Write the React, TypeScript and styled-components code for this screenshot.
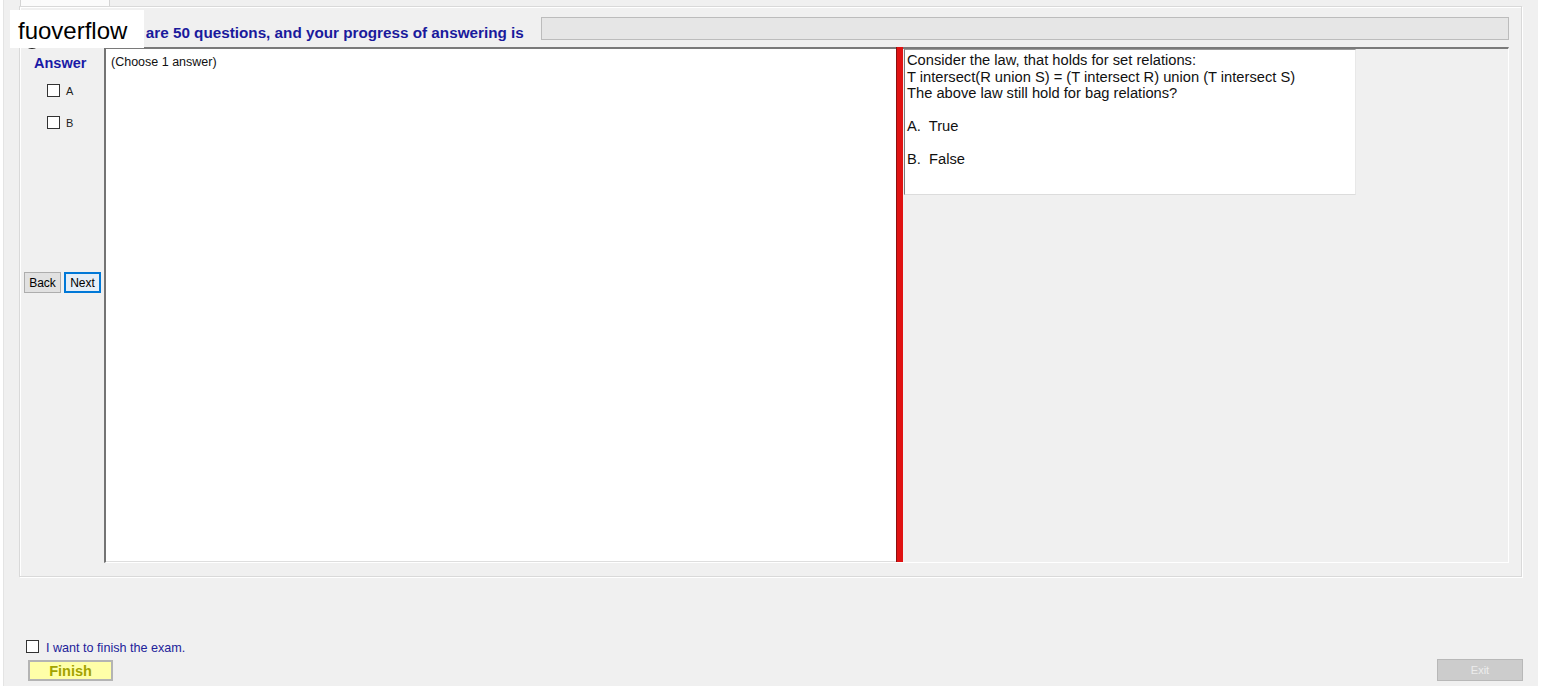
import React from 'react';
import styled, { createGlobalStyle } from 'styled-components';

const GlobalStyle = createGlobalStyle`
  html, body {
    margin: 0;
    padding: 0;
    background: #ffffff;
  }
  body {
    font-family: "Liberation Sans", Arial, sans-serif;
    color: #000;
  }
`;

const Window = styled.div`
  position: relative;
  width: 1535px;
  height: 686px;
  margin-left: 3px;
  background: #f0f0f0;
  border-left: 1px solid #e4e4e4;
  box-sizing: border-box;
  display: flex;
  flex-direction: column;
`;

const TabStrip = styled.div`
  height: 6px;
  padding-left: 16px;
  display: flex;
`;

const Tab = styled.div`
  width: 90px;
  height: 6px;
  background: #fbfbfb;
  border-left: 1px solid #d4d4d4;
  border-right: 1px solid #d4d4d4;
  box-sizing: border-box;
`;

const TabPage = styled.div`
  margin-left: 15px;
  width: 1503px;
  height: 571px;
  box-sizing: border-box;
  border: 1px solid #d9d9d9;
  box-shadow: inset 1px 1px 0 #ffffff, 1px 1px 0 #ffffff;
  padding: 10px 12px 13px 4px;
  display: flex;
  flex-direction: column;
  gap: 7px;
`;

const HeaderRow = styled.div`
  height: 23px;
  display: flex;
  align-items: flex-start;
`;

const HeaderText = styled.div`
  width: 517px;
  flex: none;
  box-sizing: border-box;
  padding: 7px 0 0 76px;
  font-size: 15.25px;
  line-height: 17px;
  font-weight: bold;
  color: #1a1a9c;
  white-space: nowrap;
  overflow: hidden;
`;

const ProgressBar = styled.div`
  flex: 1;
  height: 23px;
  box-sizing: border-box;
  background: #e6e6e6;
  border: 1px solid #bcbcbc;
`;

const ContentRow = styled.div`
  height: 516px;
  display: flex;
`;

const AnswerColumn = styled.div`
  width: 80px;
  flex: none;
  display: flex;
  flex-direction: column;
  padding-top: 8px;
  box-sizing: border-box;
`;

const AnswerTitle = styled.div`
  padding-left: 10px;
  font-size: 14.5px;
  font-weight: bold;
  color: #1a1aa6;
  line-height: 17px;
`;

const OptionRow = styled.label<{ $gap: number }>`
  display: flex;
  align-items: center;
  gap: 6px;
  padding-left: 23px;
  margin-top: ${p => p.$gap}px;
  font-size: 11px;
  color: #222;
  height: 13px;
`;

const Box = styled.span`
  width: 13px;
  height: 13px;
  box-sizing: border-box;
  border: 1px solid #333;
  background: #fff;
  flex: none;
`;

const NavRow = styled.div`
  margin-top: 143px;
  display: flex;
  gap: 3px;
`;

const NavButton = styled.button<{ $focused?: boolean }>`
  width: 37px;
  height: 21px;
  padding: 0;
  box-sizing: border-box;
  font-family: "Liberation Sans", Arial, sans-serif;
  font-size: 12px;
  color: #000;
  background: ${p => (p.$focused ? '#e5eef7' : '#e1e1e1')};
  border: ${p => (p.$focused ? '2px solid #0078d7' : '1px solid #adadad')};
`;

const SplitContainer = styled.div`
  flex: 1;
  display: flex;
  box-sizing: border-box;
  border-top: 2px solid #7a7a7a;
  border-left: 2px solid #747474;
  border-right: 1px solid #ffffff;
  border-bottom: 1px solid #ffffff;
  box-shadow: inset -1px -1px 0 #dedede;
`;

const QuestionPane = styled.div`
  width: 790px;
  flex: none;
  background: #ffffff;
  padding: 6px 5px;
  box-sizing: border-box;
  font-size: 12.5px;
  color: #111;
  margin-bottom: 1px;
`;

const Splitter = styled.div`
  width: 7px;
  flex: none;
  margin-top: -2px;
  background: #e01212;
  border-left: 1px solid #8a1010;
  box-sizing: border-box;
`;

const DetailPane = styled.div`
  flex: 1;
  padding-left: 1px;
  background: #f0f0f0;
`;

const TextBox = styled.div`
  width: 452px;
  height: 146px;
  box-sizing: border-box;
  background: #ffffff;
  border-left: 1px solid #7a7a7a;
  border-top: 1px solid #9a9a9a;
  border-bottom: 1px solid #dcdcdc;
  border-right: 1px solid #e8e8e8;
  padding: 2px 2px;
  font-size: 14.7px;
  line-height: 16.5px;
  white-space: pre;
  color: #111;
`;

const Footer = styled.div`
  flex: 1;
  display: flex;
  justify-content: space-between;
  align-items: flex-end;
  padding: 0 15px 5px 22px;
`;

const FinishGroup = styled.div`
  display: flex;
  flex-direction: column;
  gap: 7px;
`;

const ConfirmRow = styled.label`
  display: flex;
  align-items: center;
  gap: 7px;
  font-size: 12.6px;
  color: #22229a;
  height: 14px;
`;

const ConfirmText = styled.span`
  padding-top: 4px;
`;

const FinishButton = styled.button`
  margin-left: 2px;
  width: 85px;
  height: 21px;
  box-sizing: border-box;
  padding: 0;
  background: #ffffa8;
  border: 2px solid #b4b4b4;
  font-family: "Liberation Sans", Arial, sans-serif;
  font-size: 14.5px;
  font-weight: bold;
  color: #a3a300;
`;

const ExitButton = styled.button`
  width: 86px;
  height: 22px;
  box-sizing: border-box;
  padding: 0;
  background: #cccccc;
  border: 1px solid #b8b8b8;
  font-family: "Liberation Sans", Arial, sans-serif;
  font-size: 11px;
  color: #ececec;
`;

const Watermark = styled.div`
  position: absolute;
  left: 6px;
  top: 10px;
  width: 134px;
  height: 38px;
  background: #ffffff;
  box-sizing: border-box;
  padding-left: 8px;
  font-size: 24px;
  line-height: 42px;
  overflow: hidden;
  color: #000;
  z-index: 2;
`;

const HiddenIcon = styled.div`
  position: absolute;
  left: 20px;
  top: 33px;
  width: 16px;
  height: 16px;
  box-sizing: border-box;
  border: 2px solid #222;
  border-radius: 50%;
  z-index: 1;
`;

const questionText = `Consider the law, that holds for set relations:
T intersect(R union S) = (T intersect R) union (T intersect S)
The above law still hold for bag relations?

A.  True

B.  False`;

export default function App() {
  return (
    <>
      <GlobalStyle />
      <Window>
        <HiddenIcon />
        <Watermark>fuoverflow</Watermark>
        <TabStrip>
          <Tab />
        </TabStrip>
        <TabPage>
          <HeaderRow>
            <HeaderText>There are 50 questions, and your progress of answering is</HeaderText>
            <ProgressBar />
          </HeaderRow>
          <ContentRow>
            <AnswerColumn>
              <AnswerTitle>Answer</AnswerTitle>
              <OptionRow $gap={12}>
                <Box />A
              </OptionRow>
              <OptionRow $gap={19}>
                <Box />B
              </OptionRow>
              <NavRow>
                <NavButton>Back</NavButton>
                <NavButton $focused>Next</NavButton>
              </NavRow>
            </AnswerColumn>
            <SplitContainer>
              <QuestionPane>(Choose 1 answer)</QuestionPane>
              <Splitter />
              <DetailPane>
                <TextBox>{questionText}</TextBox>
              </DetailPane>
            </SplitContainer>
          </ContentRow>
        </TabPage>
        <Footer>
          <FinishGroup>
            <ConfirmRow>
              <Box />
              <ConfirmText>I want to finish the exam.</ConfirmText>
            </ConfirmRow>
            <FinishButton>Finish</FinishButton>
          </FinishGroup>
          <ExitButton disabled>Exit</ExitButton>
        </Footer>
      </Window>
    </>
  );
}
